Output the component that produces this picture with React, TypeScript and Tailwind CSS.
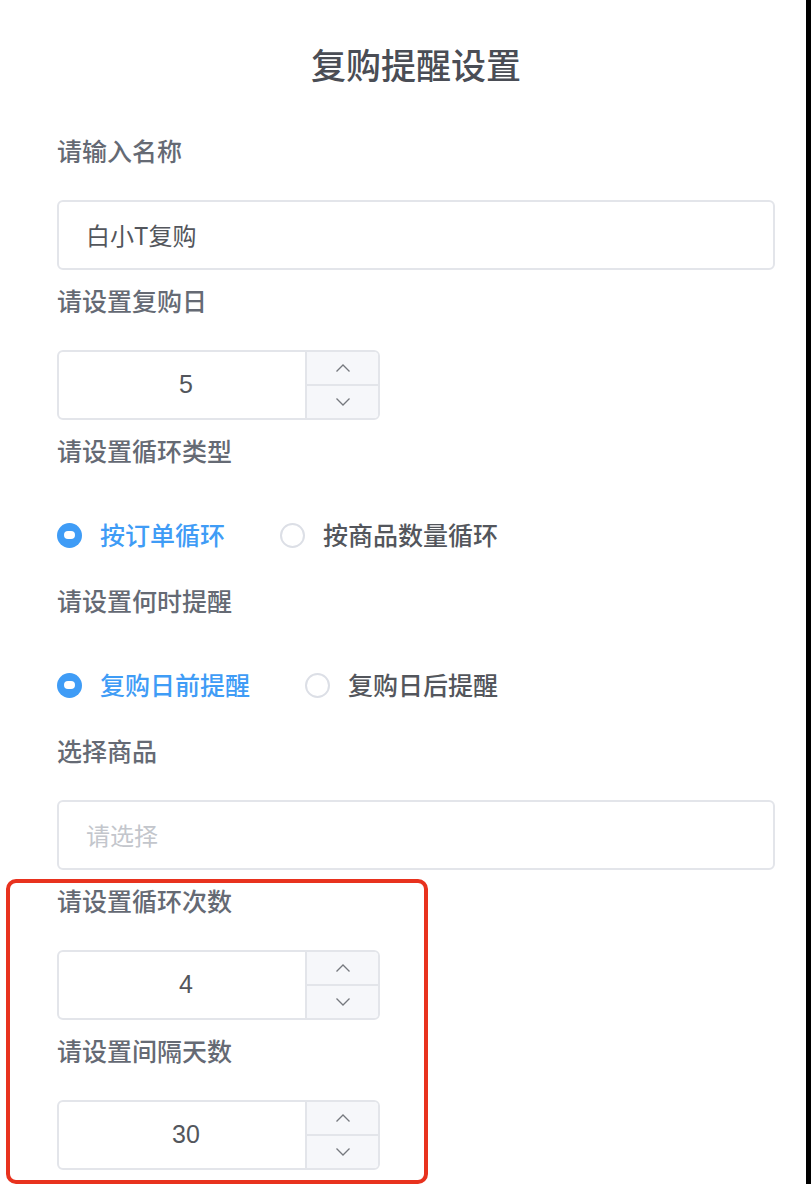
const font = { fontFamily: '"Noto Sans CJK SC", "Liberation Sans", sans-serif' };
const numFont = { fontFamily: '"Liberation Sans", "Noto Sans CJK SC", sans-serif' };

function Label({ text }: { text: string }) {
  return (
    <div className="flex h-[50px] items-center text-[25px] font-medium text-[#656a74]">
      {text}
    </div>
  );
}

function Chevron({ up }: { up?: boolean }) {
  return (
    <svg width="16" height="10" viewBox="0 0 16 10" fill="none" stroke="#75787e" strokeWidth="1.3">
      {up ? <path d="M1.5 8.5 L8 2 L14.5 8.5" /> : <path d="M1.5 1.5 L8 8 L14.5 1.5" />}
    </svg>
  );
}

function NumberInput({ value }: { value: number }) {
  return (
    <div className="flex h-[70px] w-[323px] overflow-hidden rounded-[6px] border-2 border-[#e3e5ea] bg-white">
      <div
        className="flex flex-1 items-center justify-center pl-[8px] text-[25px] text-[#53565c]"
        style={numFont}
      >
        {value}
      </div>
      <div className="flex w-[73px] flex-col border-l-2 border-[#e3e5ea] bg-[#f6f7fa]">
        <button className="flex flex-1 items-center justify-center border-b-2 border-[#e3e5ea]">
          <Chevron up />
        </button>
        <button className="flex flex-1 items-center justify-center">
          <Chevron />
        </button>
      </div>
    </div>
  );
}

function Radio({ text, checked }: { text: string; checked?: boolean }) {
  return (
    <div className="flex items-center gap-[18px]">
      {checked ? (
        <span className="flex h-[25px] w-[25px] items-center justify-center rounded-full bg-[#3f9cf6]">
          <span className="h-[8px] w-[11px] rounded-[4px] bg-white" />
        </span>
      ) : (
        <span className="h-[25px] w-[25px] rounded-full border-2 border-[#dcdfe6] bg-white" />
      )}
      <span
        className={`text-[25px] font-medium ${checked ? 'text-[#3f9cf6]' : 'text-[#53565c]'}`}
      >
        {text}
      </span>
    </div>
  );
}

function Field({ label, children }: { label: string; children: React.ReactNode }) {
  return (
    <div className="h-[150px]">
      <Label text={label} />
      <div className="mt-[24px]">{children}</div>
    </div>
  );
}

export default function App() {
  return (
    <div className="relative flex h-[1184px] w-[812px] overflow-hidden bg-white" style={font}>
      <div className="flex-1 pl-[57px] pr-[31px]">
        <h1 className="mt-[40px] mb-[38px] text-center text-[35px] leading-[48px] font-medium text-[#4a4d55]">
          复购提醒设置
        </h1>

        <Field label="请输入名称">
          <div className="flex h-[70px] items-center rounded-[6px] border-2 border-[#e3e5ea] px-[27px] text-[24px] text-[#53565c]">
            白小T复购
          </div>
        </Field>

        <Field label="请设置复购日">
          <NumberInput value={5} />
        </Field>

        <Field label="请设置循环类型">
          <div className="flex h-[70px] items-center gap-[55px]">
            <Radio text="按订单循环" checked />
            <Radio text="按商品数量循环" />
          </div>
        </Field>

        <Field label="请设置何时提醒">
          <div className="flex h-[70px] items-center gap-[55px]">
            <Radio text="复购日前提醒" checked />
            <Radio text="复购日后提醒" />
          </div>
        </Field>

        <Field label="选择商品">
          <div className="flex h-[70px] items-center rounded-[6px] border-2 border-[#e3e5ea] px-[27px] text-[24px] text-[#c3c6cc]">
            请选择
          </div>
        </Field>

        <Field label="请设置循环次数">
          <NumberInput value={4} />
        </Field>

        <Field label="请设置间隔天数">
          <NumberInput value={30} />
        </Field>
      </div>
      <div className="w-[5px] bg-black" />
      <div className="w-[1px] bg-white" />

      {/* annotation box */}
      <div className="absolute left-[6px] top-[879px] h-[305px] w-[422px] rounded-[10px] border-[4px] border-[#e8321e]" />
    </div>
  );
}
